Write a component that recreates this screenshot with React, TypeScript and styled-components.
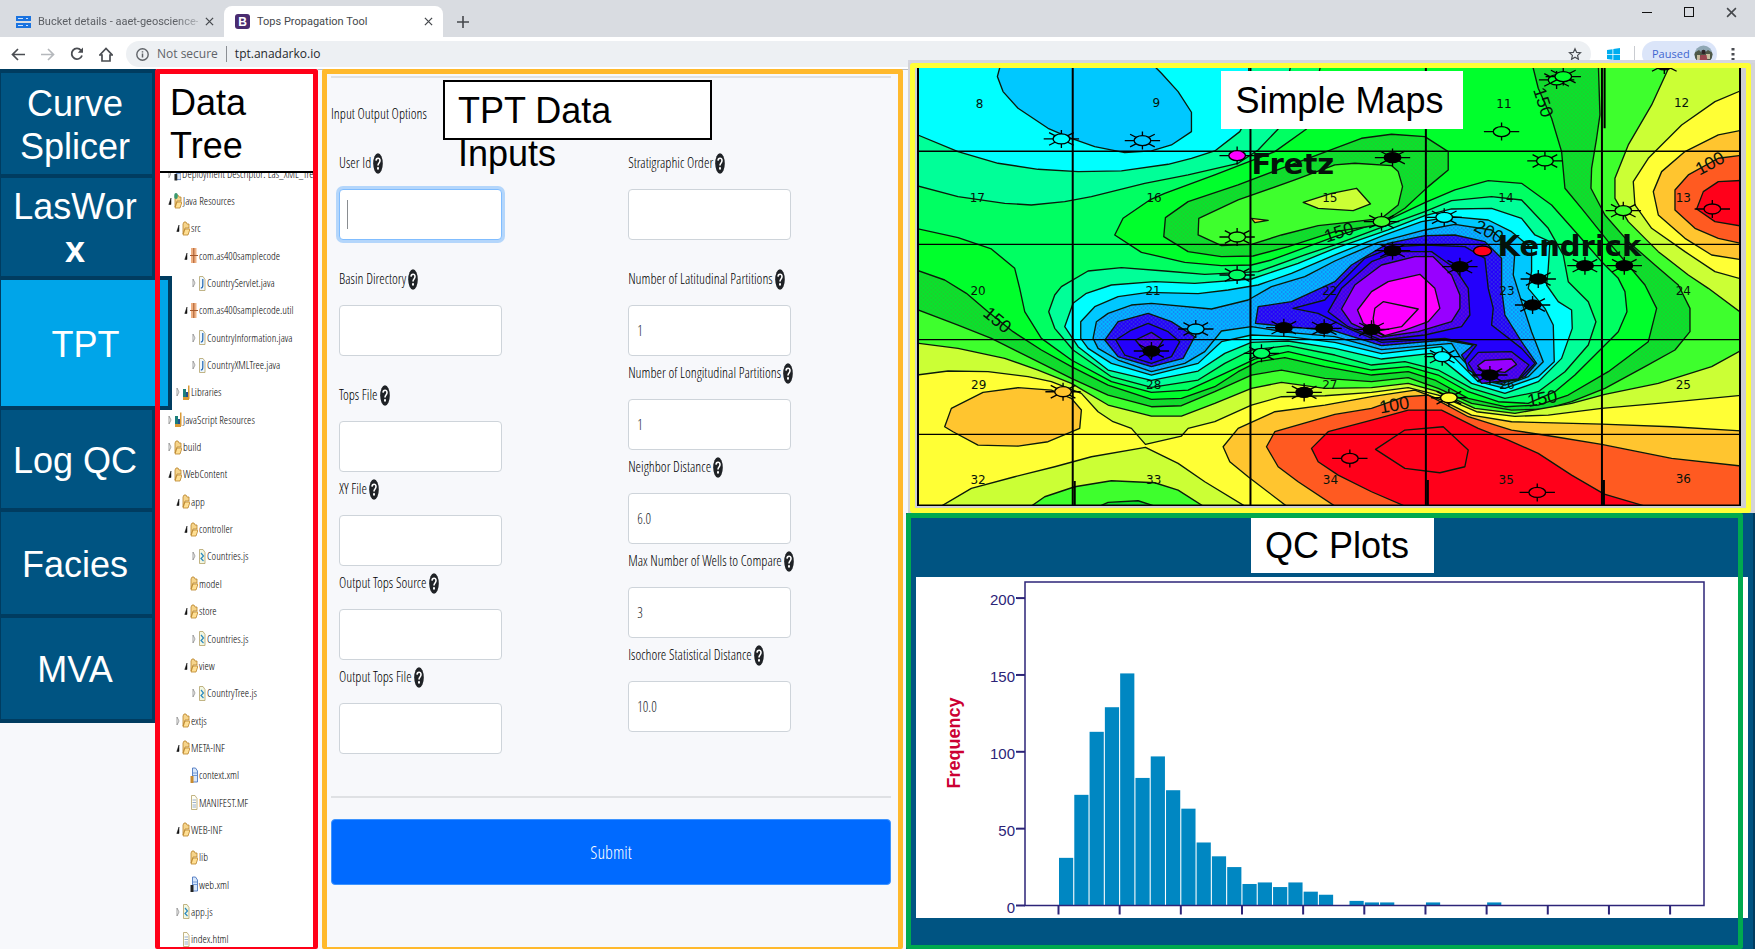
import React from "react";
import styled, { createGlobalStyle, css } from "styled-components";

const GlobalStyle = createGlobalStyle`
  *, *::before, *::after { box-sizing: border-box; }
  body { margin: 0; background: #f7f8fb; font-family: "Liberation Sans", Arial, sans-serif; }
  button, input { font: inherit; }
`;

const uiFont = `"Open Sans", "Noto Sans", sans-serif`;
const narrowFont = `"Open Sans Condensed Light", "Roboto Condensed", "Noto Sans Condensed", Roboto, sans-serif`;

/* ---------- page ---------- */

const Page = styled.div`
  display: flex;
  flex-direction: column;
  min-height: 100vh;
  overflow: hidden;
`;

const Workspace = styled.main`
  display: flex;
  flex: 1;
`;

/* ---------- browser chrome ---------- */

const TabStrip = styled.div`
  display: flex;
  align-items: flex-end;
  height: 37px;
  background: #d9dce1;
`;

const Tab = styled.div<{ $active?: boolean }>`
  display: flex;
  align-items: center;
  gap: 7px;
  width: ${(p) => (p.$active ? 219 : 224)}px;
  height: 31px;
  padding: 0 10px 0 ${(p) => (p.$active ? 11 : 16)}px;
  border-radius: 8px 8px 0 0;
  background: ${(p) => (p.$active ? "#ffffff" : "transparent")};
  color: ${(p) => (p.$active ? "#45484c" : "#5b5e63")};
  font: 11px/16px Roboto, ${uiFont};
`;

const TabTitle = styled.span<{ $fade?: boolean }>`
  flex: 1;
  min-width: 0;
  white-space: nowrap;
  ${(p) => p.$fade && css`mask-image: linear-gradient(90deg, #000 85%, rgba(0, 0, 0, 0.3));`}
`;

const IconButton = styled.button<{ $width?: number }>`
  display: flex;
  align-items: center;
  justify-content: center;
  width: ${(p) => p.$width ?? 16}px;
  height: 24px;
  padding: 0;
  border: 0;
  background: none;
  color: #45484c;
`;

const NewTab = styled.div`
  display: flex;
  align-items: center;
  height: 31px;
  margin-left: 12px;
`;

const WindowControls = styled.div`
  display: flex;
  align-self: flex-start;
  margin-left: auto;
  padding-right: 3px;
`;

const Toolbar = styled.div`
  display: flex;
  align-items: center;
  height: 33px;
  padding: 2px 14px 0 3px;
  border-bottom: 1px solid #b9bcc0;
  background: #ffffff;
  font: 12px/18px ${uiFont};
`;

const AddressBar = styled.div`
  display: flex;
  align-items: center;
  flex: 1;
  height: 26px;
  margin: 0 16px 0 6px;
  padding: 0 8px 0 10px;
  border-radius: 13px;
  background: #edf0f3;
  color: #5f6368;
`;

const Address = styled.span`
  flex: 1;
  margin-left: 8px;
  padding-left: 8px;
  border-left: 1px solid #8b8f94;
  color: #25282c;
  line-height: 16px;
`;

const NotSecure = styled.span`
  margin-left: 8px;
`;

const Profile = styled.button`
  display: flex;
  align-items: center;
  justify-content: space-between;
  width: 75px;
  height: 26px;
  margin: 0 8px 0 7px;
  padding: 0 4px 0 10px;
  border: 0;
  border-radius: 13px;
  background: #dbe5f9;
  color: #3f66d0;
  font-size: 11px;
`;

const ToolbarDivider = styled.span`
  width: 1px;
  height: 16px;
  margin-left: 14px;
  background: #c9ccd1;
`;

/* ---------- module navigation ---------- */

const Sidebar = styled.nav`
  position: relative;
  z-index: 1;
  display: flex;
  flex-direction: column;
  width: 155px;
  margin-top: -1px;
`;

const ModuleButton = styled.button<{ $height: number; $active?: boolean }>`
  width: ${(p) => (p.$active ? 172 : 156)}px;
  height: ${(p) => p.$height}px;
  margin-bottom: -4px;
  padding: 2px 4px 0 ${(p) => (p.$active ? 6 : 1)}px;
  border: 4px solid #003c60;
  border-left-width: 1px;
  background: ${(p) => (p.$active ? "#00a5e9" : "#005482")};
  color: #ffffff;
  font-size: 36px;
  line-height: 43px;
`;

/* ---------- shared callout text ---------- */

const Callout = styled.h2`
  margin: 0;
  background: #ffffff;
  color: #000000;
  font-size: 36px;
  font-weight: 400;
  line-height: 43px;
`;

/* ---------- data tree ---------- */

const TreePanel = styled.section`
  position: relative;
  display: flex;
  flex-direction: column;
  width: 163px;
  margin-top: -1px;
  background: #ffffff;

  &::after {
    content: "";
    position: absolute;
    inset: 0;
    z-index: 2;
    border: 5px solid #ff0018;
    border-bottom-width: 2px;
    border-radius: 2px;
    pointer-events: none;
  }
`;

const TreeTitle = styled(Callout)`
  height: 104px;
  padding: 12px 0 0 15px;
  border-bottom: 2px solid #000000;
`;

const TreeViewport = styled.div`
  position: relative;
  flex: 1;
  overflow: hidden;
`;

const TreeList = styled.ul`
  display: flex;
  flex-direction: column;
  height: calc(100% + 17px);
  min-height: 780px;
  margin: -13px 0 0;
  padding: 0 0 0 13px;
  list-style: none;
  color: #000000;
  font: 11px/14px ${narrowFont};
`;

const TreeRow = styled.li<{ $level: number }>`
  display: flex;
  flex: 1;
  align-items: center;
  padding-left: ${(p) => p.$level * 8}px;
  white-space: nowrap;
`;

const TreeLabel = styled.span`
  margin-left: 1px;
`;

/* ---------- input form ---------- */

const FormPanel = styled.section`
  position: relative;
  flex: 560;
  min-width: 560px;
  margin: -1px 3px 0 4px;
  padding: 2px 7px 0 4px;
  border: 5px solid #ffb92c;
  border-bottom-width: 2px;
  border-radius: 2px;
  background: #f7f8fb;
  color: #000000;
`;

const Rule = styled.hr`
  height: 2px;
  margin: 0;
  border: 0;
  background: #dfe1e4;
`;

const FormTitle = styled.h3`
  height: 68px;
  margin: 0;
  padding-top: 24px;
  font: 400 14px/24px ${narrowFont};
`;

const FormCallout = styled(Callout)`
  position: absolute;
  top: 6px;
  left: 116px;
  width: 269px;
  height: 60px;
  padding: 7px 80px 0 13px;
  border: 2px solid #000000;
`;

const FieldGrid = styled.div`
  display: grid;
  grid-template-columns: 11fr 10fr;
  padding-left: 8px;
`;

const FieldColumn = styled.div`
  display: flex;
  flex-direction: column;
`;

const Field = styled.div<{ $spaced?: boolean }>`
  margin-bottom: ${(p) => (p.$spaced ? 22 : 0)}px;
`;

const FieldLabel = styled.label`
  display: flex;
  align-items: center;
  gap: 2px;
  height: 34px;
  margin-bottom: 9px;
  white-space: nowrap;
  font: 14px/24px ${narrowFont};
`;

const TextInput = styled.input<{ $focused?: boolean }>`
  display: block;
  width: 163px;
  height: 51px;
  padding: 0 8px;
  border: 1px solid #ced4da;
  border-radius: 4px;
  outline: 0;
  background: #ffffff;
  color: #24282c;
  font: 14px/24px ${narrowFont};
  ${(p) =>
    p.$focused &&
    css`
      border-color: #80bdff;
      box-shadow: 0 0 0 3px #b4d6fb;
      background: linear-gradient(#8a8d91, #8a8d91) 7px 50% / 1px 29px no-repeat #ffffff;
    `}
`;

const SubmitButton = styled.button`
  width: 100%;
  height: 66px;
  margin-top: 21px;
  border: 1px solid #3d94ff;
  border-radius: 4px;
  background: #006aff;
  color: #ffffff;
  font: 18px/28px ${narrowFont};
`;

const FormFooter = styled.div`
  padding: 42px 0 20px;
`;

/* ---------- map and plots ---------- */

const ResultsColumn = styled.div`
  position: relative;
  display: flex;
  flex: 849;
  flex-direction: column;
  min-width: 640px;
  margin-top: -10px;
`;

const MapShell = styled.section`
  position: relative;
  margin-left: 2px;
  padding: 3px 4px 0 2px;
  background: linear-gradient(#d5d6df, #d5d6df) 0 0 / 100% 3px no-repeat #d4d4d8;
`;

const MapFrame = styled.div`
  padding: 0 5px 2px 2px;
  border: 5px solid #ffff37;
  border-radius: 3px;
  background: #cfcfd2;
`;

const MapSvg = styled.svg`
  display: block;
  width: 100%;
  height: 438px;
`;

const MapCallout = styled(Callout)`
  position: absolute;
  top: 11px;
  left: 37%;
  width: 242px;
  height: 58px;
  padding: 8px 0 0 14px;
`;

const PlotPanel = styled.section`
  position: relative;
  flex: 1;
  padding: 64px 5px 20px 10px;
  border-right: 2px solid #003c60;
  background: #005482;

  &::after {
    content: "";
    position: absolute;
    inset: 0 10px 0 0;
    border: 5px solid #00a94f;
    border-bottom-width: 4px;
    border-radius: 2px;
    pointer-events: none;
  }
`;

const PlotCallout = styled(Callout)`
  position: absolute;
  top: 5px;
  left: 345px;
  width: 183px;
  height: 55px;
  padding: 6px 0 0 14px;
`;

const PlotSvg = styled.svg`
  display: block;
  width: 100%;
  height: 341px;
  background: #ffffff;
`;

/* ---------- icons ---------- */

const HelpIcon = () => (
  <svg width="10" height="21" viewBox="0 0 10 21" aria-hidden="true">
    <ellipse cx="5" cy="10.5" rx="4.8" ry="10.2" fill="#1f2226" />
    <path d="M3 7.6C3.2 4.6 7 4.4 7 7.5 7 10 5 9.800 5 12.400" fill="none" stroke="#fff" strokeWidth="1.600" />
    <ellipse cx="5" cy="15.300" rx="1" ry="1.500" fill="#fff" />
  </svg>
);

const CloseIcon = ({ size = 9 }: { size?: number }) => (
  <svg width={size} height={size} viewBox="0 0 10 10" aria-hidden="true">
    <path d="M1 1l8 8M9 1L1 9" stroke="currentColor" strokeWidth="1.400" />
  </svg>
);

type TreeIconName = "descriptor" | "resources" | "folder" | "package" | "java" | "library" | "script" | "xml" | "web" | "text";

const TreeIcon = ({ name }: { name: TreeIconName }) => {
  const folder = (
    <>
      <path d="M1 14V4l1-2h2l1 2h2v4H3z" fill="#f6d48b" stroke="#b98329" strokeWidth=".8" />
      <path d="M1 15l2-6h5l-2 6z" fill="#ffdf93" stroke="#b98329" strokeWidth=".8" />
    </>
  );
  const sheet = (fill: string) => <path d="M1.500 1.500h3.500l2 3v11H1.500z" fill={fill} stroke="#b3a268" strokeWidth=".8" />;
  return (
    <svg width="8" height="17" viewBox="0 0 8 17" aria-hidden="true">
      {(name === "folder" || name === "resources") && folder}
      {name === "resources" && <ellipse cx="2" cy="3" rx="1.800" ry="3" fill="#3a9a70" />}
      {name === "package" && (
        <>
          <rect x="1" y="1" width="5.500" height="15" fill="#f0b183" />
          <path d="M0 8.500h8M3.800 1v15" stroke="#a5592d" strokeWidth="1" />
        </>
      )}
      {name === "library" && (
        <>
          <path d="M1 5h3v10H1z" fill="#1c7f7b" />
          <path d="M4 8h2v7H4z" fill="#234f8d" />
          <path d="M6 1.500h1.500V15H6zM1 13h6v3H1z" fill="#d99a36" />
        </>
      )}
      {name === "java" && (
        <>
          {sheet("#eef7fd")}
          <path d="M4.800 4v6.500q0 2.500-2 2.500" fill="none" stroke="#2065b4" strokeWidth="1.200" />
        </>
      )}
      {name === "script" && (
        <>
          {sheet("#f2f7e2")}
          <path d="M3 5l2.500 3L3 10.500 5.500 13" fill="none" stroke="#2d8ac0" strokeWidth="1.200" />
        </>
      )}
      {(name === "xml" || name === "web" || name === "descriptor") && (
        <>
          <path d="M2.500 1h3l2 3v11h-5z" fill="#d9e8fb" stroke="#3a68b8" strokeWidth=".8" />
          <path d="M3 6h4M3 8.500h4" stroke="#5b87cc" strokeWidth=".8" />
          <path d="M.5 9h3v7h-3z" fill={name === "xml" ? "#c98b2e" : "#222"} />
        </>
      )}
      {name === "text" && (
        <>
          {sheet("#fffef4")}
          <path d="M2.500 6h3.500M2.500 8.500h3.500M2.500 11h3.500M2.500 13h3.500" stroke="#7f9dc6" strokeWidth=".8" />
        </>
      )}
    </svg>
  );
};

const TreeArrow = ({ state }: { state?: "open" | "closed" }) => (
  <svg width="6" height="12" viewBox="0 0 6 12" aria-hidden="true">
    {state === "open" && <path d="M.8 9.500L3 3v6.500z" fill="#111" stroke="#111" strokeWidth=".5" />}
    {state === "closed" && <path d="M1 2l2 4-2 4z" fill="#fff" stroke="#8c8c8c" strokeWidth=".8" />}
  </svg>
);

/* ---------- data ---------- */

type Row = [level: number, arrow: "open" | "closed" | undefined, icon: TreeIconName, label: string];

const treeRows: Row[] = [
  [0, "closed", "descriptor", "Deployment Descriptor: Las_XML_Tree"],
  [0, "open", "resources", "Java Resources"],
  [1, "open", "folder", "src"],
  [2, "open", "package", "com.as400samplecode"],
  [3, "closed", "java", "CountryServlet.java"],
  [2, "open", "package", "com.as400samplecode.util"],
  [3, "closed", "java", "CountryInformation.java"],
  [3, "closed", "java", "CountryXMLTree.java"],
  [1, "closed", "library", "Libraries"],
  [0, "closed", "library", "JavaScript Resources"],
  [0, "closed", "folder", "build"],
  [0, "open", "folder", "WebContent"],
  [1, "open", "folder", "app"],
  [2, "open", "folder", "controller"],
  [3, "closed", "script", "Countries.js"],
  [2, undefined, "folder", "model"],
  [2, "open", "folder", "store"],
  [3, "closed", "script", "Countries.js"],
  [2, "open", "folder", "view"],
  [3, "closed", "script", "CountryTree.js"],
  [1, "closed", "folder", "extjs"],
  [1, "open", "folder", "META-INF"],
  [2, undefined, "xml", "context.xml"],
  [2, undefined, "text", "MANIFEST.MF"],
  [1, "open", "folder", "WEB-INF"],
  [2, undefined, "folder", "lib"],
  [2, undefined, "web", "web.xml"],
  [1, "closed", "script", "app.js"],
  [1, undefined, "text", "index.html"],
];

type FieldSpec = { id: string; label: string; value?: string; spaced?: boolean; focused?: boolean };

const leftFields: FieldSpec[] = [
  { id: "user-id", label: "User Id", spaced: true, focused: true },
  { id: "basin", label: "Basin Directory", spaced: true },
  { id: "tops-file", label: "Tops File" },
  { id: "xy-file", label: "XY File" },
  { id: "out-source", label: "Output Tops Source" },
  { id: "out-file", label: "Output Tops File" },
];

const rightFields: FieldSpec[] = [
  { id: "order", label: "Stratigraphic Order", spaced: true },
  { id: "lat", label: "Number of Latitudinal Partitions", value: "1" },
  { id: "lon", label: "Number of Longitudinal Partitions", value: "1" },
  { id: "neighbor", label: "Neighbor Distance", value: "6.0" },
  { id: "wells", label: "Max Number of Wells to Compare", value: "3" },
  { id: "isochore", label: "Isochore Statistical Distance", value: "10.0" },
];

const FieldItem = ({ field }: { field: FieldSpec }) => (
  <Field $spaced={field.spaced}>
    <FieldLabel htmlFor={field.id}>
      {field.label}
      <HelpIcon />
    </FieldLabel>
    <TextInput id={field.id} type="text" defaultValue={field.value} $focused={field.focused} />
  </Field>
);

/* ---------- contour map ---------- */

const C = {
  red: "#ff001a",
  ember: "#ff5a21",
  orange: "#ffc52f",
  yellow: "#ffff35",
  chartreuse: "#cbff35",
  lime: "#3eff2d",
  moss: "url(#moss)",
  green: "#00ff2c",
  spring: "#00ff62",
  mint: "#00ff98",
  cyan: "#00ffff",
  sky: "#00c8ff",
  wave: "url(#wave)",
  night: "url(#night)",
  blue: "#2400fb",
  violetDots: "url(#violetDots)",
  purple: "#9800ff",
  magenta: "#ff00ff",
};

const contours: [fill: string, points: string][] = [
  [C.spring, "20,20 1250,20 1205,222 1110,290 930,360 780,415 735,435 655,490 630,540 710,592 840,622 950,632 1040,630 1100,615 1290,545 1450,495 1560,443 1650,405 1750,377 1850,385 1940,450 2020,540 2090,620 2140,670 2160,710 2166,770 2140,830 2080,890 2010,960 1950,1010 1870,1045 1780,1040 1690,1010 1600,960 1510,935 1400,945 1260,915 1150,890 1050,912 960,955 850,1005 740,1012 620,980 500,915 410,850 360,770 345,700 330,640 260,582 160,548 20,517"],
  [C.mint, "20,20 1160,20 1120,222 1060,285 1000,325 850,360 720,385 560,425 480,440 380,450 300,445 160,425 20,388"],
  [C.cyan, "20,20 1032,20 1032,180 1005,230 930,288 860,310 790,328 650,348 520,350 400,343 280,325 160,290 20,232"],
  [C.sky, "290,20 278,65 295,110 340,160 430,220 500,250 570,275 660,293 740,288 800,270 860,230 860,172 820,110 770,55 735,20"],
  [C.mint, "450,720 470,695 550,648 650,638 780,648 900,658 1060,650 1200,600 1290,570 1450,510 1560,470 1640,437 1760,425 1850,435 1930,520 1975,600 1990,680 2050,740 2073,800 2050,870 1980,950 1900,1010 1800,1030 1700,1000 1600,945 1500,920 1400,930 1290,900 1150,872 1040,885 960,925 880,975 740,997 620,965 505,885 450,820 432,770"],
  [C.cyan, "545,715 620,690 750,680 870,685 1040,672 1180,625 1290,580 1450,525 1560,482 1640,462 1760,460 1850,490 1890,540 1935,560 1930,640 1925,690 1960,740 2000,765 2002,820 1970,910 1900,980 1800,1015 1700,985 1625,925 1580,895 1430,912 1290,880 1150,858 1040,862 960,895 880,948 740,976 610,945 520,875 480,815 505,745"],
  [C.sky, "528,850 528,800 570,755 640,725 730,712 880,716 970,705 1060,690 1160,655 1290,600 1440,540 1550,500 1640,485 1750,495 1820,530 1880,580 1880,650 1870,700 1920,760 1945,810 1948,920 1900,965 1800,1000 1720,980 1650,910 1610,875 1430,896 1290,862 1150,845 1040,840 950,860 880,925 740,960 620,925 550,880"],
  [C.wave, "565,850 575,800 610,775 680,750 740,745 920,762 1030,735 1100,695 1200,665 1290,618 1420,562 1560,525 1650,508 1760,525 1830,590 1825,660 1850,740 1880,830 1915,920 1870,965 1800,990 1730,975 1665,905 1640,865 1430,884 1290,845 1150,832 1040,815 950,828 900,890 840,925 740,950 640,915 580,880"],
  [C.night, "600,855 640,800 730,775 800,800 870,845 835,910 740,935 640,905"],
  [C.blue, "633,855 680,825 730,805 790,830 825,860 800,905 740,925 660,900"],
  [C.violetDots, "692,855 740,832 775,855 738,912"],
  [C.night, "1052,805 1060,755 1160,740 1290,680 1340,630 1450,565 1560,542 1650,540 1740,560 1790,610 1790,700 1800,780 1850,860 1895,925 1860,965 1790,985 1710,965 1670,900 1705,870 1620,855 1430,872 1290,828 1150,815"],
  [C.blue, "1165,760 1260,735 1310,680 1380,610 1470,575 1560,570 1680,575 1740,610 1750,700 1765,760 1760,810 1850,880 1890,925 1840,975 1760,980 1690,945 1680,915 1715,870 1620,850 1430,862 1330,820 1240,775"],
  [C.violetDots, "1270,770 1310,700 1400,620 1480,590 1580,590 1650,640 1690,700 1695,780 1670,815 1560,840 1430,855 1330,815"],
  [C.purple, "1310,762 1350,690 1430,630 1530,605 1585,605 1640,660 1665,720 1665,760 1640,800 1540,830 1430,846 1340,805"],
  [C.magenta, "1358,765 1400,710 1450,680 1545,658 1590,700 1605,760 1570,800 1500,825 1440,842 1375,805"],
  ["none", "1405,790 1410,760 1435,740 1540,762 1490,815 1410,830"],
  [C.violetDots, "1690,925 1720,892 1820,890 1872,930 1840,972 1730,985"],
  [C.purple, "1718,932 1740,916 1820,912 1835,928 1800,952 1730,945"],
  [C.moss, "1290,280 1130,340 1000,390 850,440 782,488 777,545 850,590 950,605 1045,603 1150,575 1290,530 1420,510 1500,460 1570,395 1630,345 1630,290 1560,245 1460,238 1370,250"],
  [C.lime, "1290,330 1170,375 1000,435 882,490 880,540 950,572 1040,568 1130,540 1240,512 1330,502 1430,490 1480,450 1493,395 1480,350 1460,332 1350,325"],
  [C.chartreuse, "1195,442 1280,415 1355,400 1397,447 1345,467 1240,460"],
  [C.orange, "1040,490 1090,496 1050,503"],
  [C.moss, "20,640 120,675 185,715 250,770 325,830 410,885 500,935 610,990 740,1033 830,1030 930,995 1000,950 1060,920 1140,908 1260,935 1400,960 1510,950 1590,975 1690,1030 1800,1055 1900,1050 1990,1020 2110,950 2230,860 2255,760 2220,690 2110,560 2030,460 1980,400 1970,290 1940,190 1900,100 1880,20 2600,20 2600,1400 20,1400"],
  [C.lime, "20,757 160,810 260,850 380,910 500,970 610,1020 740,1055 830,1052 930,1010 1040,960 1130,945 1260,970 1400,980 1510,968 1600,1000 1700,1045 1820,1065 1920,1062 2000,1040 2100,1000 2220,935 2310,885 2355,830 2355,760 2320,690 2250,630 2170,560 2100,480 2058,400 2060,340 2075,250 2085,180 2080,20 2600,20 2600,1400 20,1400"],
  [C.chartreuse, "20,862 160,880 300,910 400,945 500,985 610,1050 740,1083 830,1083 930,1045 1040,1000 1130,982 1260,1000 1400,998 1510,985 1600,1010 1710,1060 1830,1075 2000,1045 2100,1018 2260,985 2420,935 2520,880 2600,870 2600,1400 20,1400"],
  [C.yellow, "20,962 130,948 250,950 370,965 440,980 530,1015 580,1070 625,1100 680,1120 722,1168 830,1143 850,1120 930,1100 1040,1050 1130,1025 1260,1022 1400,1012 1510,998 1600,1020 1715,1070 1830,1084 1930,1080 2090,1060 2260,1045 2520,1020 2520,1400 20,1400"],
  [C.orange, "955,1175 1000,1120 1110,1070 1260,1050 1400,1025 1530,1005 1610,1035 1700,1080 1820,1100 2090,1107 2300,1115 2520,1128 2520,1400 1200,1400 1145,1353 1030,1265 975,1220"],
  [C.ember, "1085,1175 1110,1130 1290,1078 1400,1060 1500,1025 1570,1020 1690,1085 1820,1125 1950,1145 2090,1168 2300,1210 2520,1234 2520,1400 1360,1400 1290,1353 1180,1280 1120,1235"],
  [C.red, "1220,1180 1270,1130 1420,1090 1510,1065 1610,1065 1720,1120 1810,1155 1900,1195 2000,1260 2098,1317 2220,1353 2300,1400 1600,1400 1500,1353 1400,1310 1300,1260 1240,1220"],
  ["none", "1412,1183 1500,1125 1615,1115 1690,1185 1680,1235 1605,1253 1500,1240"],
  [C.orange, "120,1115 140,1060 235,1012 340,998 440,1005 500,1030 530,1065 525,1120 430,1160 340,1173 220,1170 145,1130"],
  [C.chartreuse, "60,1380 110,1353 200,1300 330,1265 450,1235 560,1205 722,1177 820,1225 900,1280 1020,1353 1060,1380"],
  [C.lime, "360,1380 380,1353 420,1325 510,1295 620,1277 750,1283 820,1305 895,1353 920,1380"],
  [C.moss, "540,1380 585,1353 610,1342 700,1337 750,1353 790,1380"],
  [C.chartreuse, "2300,20 2240,150 2170,270 2130,370 2130,430 2170,500 2260,590 2350,660 2410,700 2520,782 2600,782 2600,20"],
  [C.yellow, "2520,102 2430,140 2330,210 2230,310 2185,380 2190,450 2240,520 2340,590 2430,650 2520,675"],
  [C.orange, "2520,224 2440,240 2340,290 2270,350 2245,410 2260,480 2340,550 2420,600 2520,616"],
  [C.ember, "2520,300 2440,310 2350,360 2310,405 2310,465 2370,520 2440,550 2520,568"],
  [C.red, "2520,376 2440,380 2395,410 2375,462 2430,500 2520,515"],
];

const sectionLabels: [text: string, x: number, y: number][] = [
  ["8", 225, 158], ["9", 755, 156], ["11", 1797, 160], ["12", 2330, 156],
  ["17", 218, 440], ["16", 748, 440], ["15", 1275, 440], ["14", 1803, 440], ["13", 2335, 440],
  ["20", 220, 720], ["21", 745, 720], ["22", 1275, 720], ["23", 1806, 720], ["24", 2335, 720],
  ["29", 222, 1002], ["28", 747, 1002], ["27", 1275, 1002], ["26", 1806, 1002], ["25", 2335, 1002],
  ["32", 220, 1288], ["33", 747, 1286], ["34", 1277, 1286], ["35", 1804, 1286], ["36", 2335, 1284],
];

const contourLabels: [text: string, x: number, y: number, angle: number][] = [
  ["150", 1915, 142, 72],
  ["150", 1302, 532, -18],
  ["150", 278, 795, 40],
  ["150", 1912, 1030, -10],
  ["100", 1468, 1050, -10],
  ["100", 2415, 325, -28],
  ["200", 1752, 530, 28],
];

const RAYS = "M-53 0h106M0-27v54";
const DIAGONALS = "M-37-19l74 38M37-19l-74 38";

const Well = ({ x, y, fill, rays = "sun" }: { x: number; y: number; fill: string; rays?: "sun" | "cross" }) => (
  <g transform={`translate(${x} ${y})`}>
    <path d={rays === "sun" ? RAYS + DIAGONALS : RAYS} stroke="#000" strokeWidth="4" />
    <ellipse rx="25" ry="15" fill={fill} stroke="#000" strokeWidth="4" />
  </g>
);

const openWells: [number, number, string][] = [
  [470, 252, C.cyan], [713, 257, C.sky], [997, 546, C.lime], [997, 660, C.spring], [1920, 318, C.green],
  [1430, 500, C.lime], [1618, 487, C.cyan], [2155, 467, C.lime], [873, 822, C.sky], [1070, 895, C.spring],
  [475, 1010, C.orange], [1632, 1028, C.yellow], [1955, 75, C.green], [1975, 65, C.green], [1612, 905, C.cyan],
];
const dryWells: [number, number, string][] = [
  [1790, 230, C.green], [2422, 462, C.red], [1335, 1210, C.red], [1897, 1312, C.red],
];
const oilWells: [number, number][] = [
  [1463, 308], [1463, 587], [1665, 635], [1900, 672], [2040, 632], [2158, 632], [740, 888],
  [1137, 818], [1258, 820], [1400, 823], [1883, 750], [1198, 1012], [1755, 960], [2278, 30],
];

const Dots = ({ id, base, dot }: { id: string; base: string; dot: string }) => (
  <pattern id={id} width="12" height="12" patternUnits="userSpaceOnUse">
    <rect width="12" height="12" fill={base} />
    <path d="M0 1h5v4H0zM6 7h5v4H6z" fill={dot} />
  </pattern>
);

const ContourMap = () => (
  <MapSvg viewBox="37 39 2471 1314" preserveAspectRatio="xMidYMid slice" role="img" aria-label="Contour map">
    <defs>
      <Dots id="moss" base="#08e42c" dot="#2cc030" />
      <Dots id="wave" base="#00b8ff" dot="#2468ee" />
      <Dots id="night" base="#2400fb" dot="#3a48d8" />
      <Dots id="violetDots" base="#3a00f0" dot="#7010d8" />
    </defs>
    <rect x="0" y="0" width="2600" height="1400" fill={C.green} />
    <g stroke="#0a1a0a" strokeWidth="4" strokeLinejoin="round">
      {contours.map(([fill, points], i) => (
        <polygon key={i} fill={fill} points={points} />
      ))}
    </g>
    <path d="M37 289H2508M37 568H2508M37 854H2508M37 1138H2508" stroke="#000" strokeWidth="4" />
    <path d="M504 39V1353M1037 39V1353M1563 39V1353M2091 39V1353" stroke="#000" strokeWidth="6" />
    <path d="M510 1278V1353M1569 1275V1353M2097 1275V1353M2099 39V220" stroke="#000" strokeWidth="6" />
    {openWells.map(([x, y, fill], i) => <Well key={i} x={x} y={y} fill={fill} />)}
    {dryWells.map(([x, y, fill], i) => <Well key={i} x={x} y={y} fill={fill} rays="cross" />)}
    {oilWells.map(([x, y], i) => <Well key={i} x={x} y={y} fill="#000" />)}
    <Well x={997} y={302} fill={C.magenta} rays="cross" />
    <ellipse cx="1733" cy="588" rx="27" ry="15" fill={C.red} stroke="#000" strokeWidth="4" />
    <g fontFamily="DejaVu Sans, sans-serif" fontSize="36" textAnchor="middle" fill="#06140a">
      {sectionLabels.map(([text, x, y]) => <text key={text} x={x} y={y}>{text}</text>)}
    </g>
    <g fontFamily="Liberation Sans, Arial, sans-serif" fontSize="54" textAnchor="middle" fill="#06140a">
      {contourLabels.map(([text, x, y, angle], i) => (
        <text key={i} transform={`translate(${x} ${y}) rotate(${angle})`} dy="18">{text}</text>
      ))}
    </g>
    <g fontFamily="DejaVu Sans, sans-serif" fontWeight="700" fontSize="87" fill="#04120a">
      <text x="1040" y="358">Fretz</text>
      <text x="1778" y="604">Kendrick</text>
    </g>
    <path d="M40 39V1351H2505V39" fill="none" stroke="#000" strokeWidth="6" />
  </MapSvg>
);

/* ---------- histogram ---------- */

const counts = [31, 72, 113, 129, 151, 83, 97, 75, 63, 41, 32, 25, 14, 15, 12, 15, 9, 7, 0, 3, 2, 2, 0, 0, 2, 0, 0, 0, 2];
const BASE = 328.5;
const UNIT = 1.537;
const STEP = 15.29;

const Histogram = () => (
  <PlotSvg viewBox="0 0 832 341" role="img" aria-label="Frequency histogram">
    {counts.map((n, i) => (
      <rect key={i} x={143 + i * STEP} y={BASE - n * UNIT} width="14.200" height={n * UNIT} fill="#0087c2" />
    ))}
    <rect x="109" y="5" width="679" height="323.500" fill="none" stroke="#2c2478" strokeWidth="1.500" />
    {[0, 50, 100, 150, 200].map((v) => (
      <g key={v}>
        <path d={`M100 ${BASE - v * UNIT}h9`} stroke="#2c2478" strokeWidth="2" />
        <text x="99" y={BASE - v * UNIT + 7} textAnchor="end" fontFamily="Liberation Sans, Arial, sans-serif" fontSize="15" fill="#2c2478">
          {v}
        </text>
      </g>
    ))}
    {Array.from({ length: 11 }, (_, i) => (
      <path key={i} d={`M${142.500 + i * STEP * 4} ${BASE}v9`} stroke="#2c2478" strokeWidth="2" />
    ))}
    <text transform="translate(44 166) rotate(-90)" textAnchor="middle" fontFamily="Liberation Sans, Arial, sans-serif" fontWeight="700" fontSize="18" fill="#cc0033">
      Frequency
    </text>
  </PlotSvg>
);

/* ---------- app ---------- */

export default function App() {
  return (
    <Page>
      <GlobalStyle />
      <header>
        <TabStrip>
          <Tab>
            <svg width="15" height="12" viewBox="0 0 15 12" aria-hidden="true">
              <path d="M0 0h15v5H0zM0 7h15v5H0z" fill="#1a73e0" />
              <path d="M2 2h5v1H2zM10 2h2v1h-2zM2 9h5v1H2zM10 9h2v1h-2z" fill="#cfe2fb" />
            </svg>
            <TabTitle $fade>Bucket details - aaet-geoscience-</TabTitle>
            <IconButton aria-label="Close tab" $width={9}><CloseIcon /></IconButton>
          </Tab>
          <Tab $active>
            <svg width="15" height="15" viewBox="0 0 15 15" aria-hidden="true">
              <rect width="15" height="15" rx="3" fill="#4a2c70" />
              <text x="7.500" y="12" textAnchor="middle" fill="#fff" fontFamily="Liberation Sans, sans-serif" fontWeight="700" fontSize="12">B</text>
            </svg>
            <TabTitle>Tops Propagation Tool</TabTitle>
            <IconButton aria-label="Close tab" $width={9}><CloseIcon /></IconButton>
          </Tab>
          <NewTab>
            <IconButton aria-label="New tab">
              <svg width="12" height="12" viewBox="0 0 12 12"><path d="M6 0v12M0 6h12" stroke="currentColor" strokeWidth="1.600" /></svg>
            </IconButton>
          </NewTab>
          <WindowControls>
            <IconButton aria-label="Minimize" $width={42}>
              <svg width="10" height="10" viewBox="0 0 10 10"><path d="M0 5.500h10" stroke="#111" /></svg>
            </IconButton>
            <IconButton aria-label="Maximize" $width={42}>
              <svg width="10" height="10" viewBox="0 0 10 10"><rect x=".5" y=".5" width="9" height="9" fill="none" stroke="#111" /></svg>
            </IconButton>
            <IconButton aria-label="Close window" $width={42}><CloseIcon size={11} /></IconButton>
          </WindowControls>
        </TabStrip>
        <Toolbar>
          <IconButton aria-label="Back" $width={30}>
            <svg width="14" height="13" viewBox="0 0 14 13"><path d="M7 1L1.500 6.500 7 12M2 6.500h12" fill="none" stroke="#4a4d52" strokeWidth="1.700" /></svg>
          </IconButton>
          <IconButton aria-label="Forward" $width={29}>
            <svg width="14" height="13" viewBox="0 0 14 13"><path d="M7 1l5.500 5.500L7 12M12 6.500H0" fill="none" stroke="#b5b8bc" strokeWidth="1.700" /></svg>
          </IconButton>
          <IconButton aria-label="Reload" $width={29}>
            <svg width="14" height="14" viewBox="0 0 14 14">
              <path d="M12 8.500A5.300 5.300 0 1 1 11 3.300" fill="none" stroke="#4a4d52" strokeWidth="1.800" />
              <path d="M13 .5v5.300H7.800z" fill="#4a4d52" />
            </svg>
          </IconButton>
          <IconButton aria-label="Home" $width={29}>
            <svg width="14" height="15" viewBox="0 0 14 15"><path d="M.8 8L7 1.500 13.200 8H11v6H3V8z" fill="none" stroke="#4a4d52" strokeWidth="1.700" /></svg>
          </IconButton>
          <AddressBar>
            <svg width="13" height="13" viewBox="0 0 13 13" aria-hidden="true">
              <circle cx="6.500" cy="6.500" r="5.700" fill="none" stroke="#5f6368" strokeWidth="1.400" />
              <path d="M6.500 5.600v4M6.500 3.200v1.400" stroke="#5f6368" strokeWidth="1.500" />
            </svg>
            <NotSecure>Not secure</NotSecure>
            <Address>tpt.anadarko.io</Address>
            <IconButton aria-label="Bookmark">
              <svg width="14" height="14" viewBox="0 0 24 24">
                <path d="M12 3l2.800 6.300 6.700.6-5.100 4.500 1.500 6.700-5.900-3.500-5.900 3.500 1.500-6.700-5.100-4.500 6.700-.6z" fill="none" stroke="#4a4d52" strokeWidth="2" />
              </svg>
            </IconButton>
          </AddressBar>
          <svg width="13" height="13" viewBox="0 0 13 13" aria-hidden="true">
            <path d="M0 2l5.500-.8V6H0zM6.300 1L13 0v6H6.300zM0 6.800h5.500v5L0 11zM6.300 6.800H13V13l-6.700-1z" fill="#00adef" />
          </svg>
          <ToolbarDivider />
          <Profile>
            Paused
            <svg width="19" height="19" viewBox="0 0 19 19" aria-hidden="true">
              <clipPath id="avatar"><circle cx="9.500" cy="9.500" r="9" /></clipPath>
              <g clipPath="url(#avatar)">
                <rect width="19" height="19" fill="#8fa7b4" />
                <path d="M0 8l5-3 4 4 5-4 5 3v11H0z" fill="#4f5848" />
                <path d="M3 10h3v6H3zM12 9h4v5h-4z" fill="#c9bda0" />
                <circle cx="9.500" cy="7" r="2.200" fill="#2f2527" />
                <path d="M6.500 10h6l1 6h-8z" fill="#9a4550" />
              </g>
            </svg>
          </Profile>
          <IconButton aria-label="Menu">
            <svg width="4" height="14" viewBox="0 0 4 14"><path d="M.5 1h3v2.500h-3zM.5 6h3v2.500h-3zM.5 11h3v2.500h-3z" fill="#4a4d52" /></svg>
          </IconButton>
        </Toolbar>
      </header>
      <Workspace>
        <Sidebar aria-label="Modules">
          <ModuleButton $height={109}>Curve Splicer</ModuleButton>
          <ModuleButton $height={106}>LasWor<br /><b>x</b></ModuleButton>
          <ModuleButton $height={134} $active>TPT</ModuleButton>
          <ModuleButton $height={106}>Log QC</ModuleButton>
          <ModuleButton $height={110}>Facies</ModuleButton>
          <ModuleButton $height={109}>MVA</ModuleButton>
        </Sidebar>
        <TreePanel>
          <TreeTitle>Data<br />Tree</TreeTitle>
          <TreeViewport>
            <TreeList>
              {treeRows.map(([level, arrow, icon, label], i) => (
                <TreeRow key={i} $level={level}>
                  <TreeArrow state={arrow} />
                  <TreeIcon name={icon} />
                  <TreeLabel>{label}</TreeLabel>
                </TreeRow>
              ))}
            </TreeList>
          </TreeViewport>
        </TreePanel>
        <FormPanel>
          <Rule />
          <FormTitle>Input Output Options</FormTitle>
          <FormCallout>TPT Data Inputs</FormCallout>
          <FieldGrid>
            <FieldColumn>{leftFields.map((f) => <FieldItem key={f.id} field={f} />)}</FieldColumn>
            <FieldColumn>{rightFields.map((f) => <FieldItem key={f.id} field={f} />)}</FieldColumn>
          </FieldGrid>
          <FormFooter>
            <Rule />
            <SubmitButton type="submit">Submit</SubmitButton>
          </FormFooter>
        </FormPanel>
        <ResultsColumn>
          <MapShell>
            <MapFrame><ContourMap /></MapFrame>
            <MapCallout>Simple Maps</MapCallout>
          </MapShell>
          <PlotPanel>
            <PlotCallout>QC Plots</PlotCallout>
            <Histogram />
          </PlotPanel>
        </ResultsColumn>
      </Workspace>
    </Page>
  );
}
